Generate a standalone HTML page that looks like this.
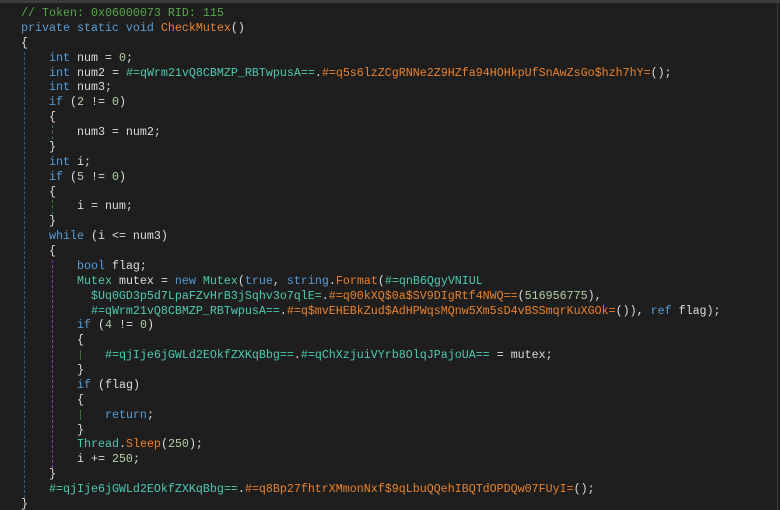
<!DOCTYPE html>
<html><head><meta charset="utf-8"><style>
html,body{margin:0;padding:0;background:#1e1e1e;width:780px;height:510px;overflow:hidden;position:relative}
.top{position:absolute;left:0;top:0;width:780px;height:3px;background:#3c3c3c}
.rb{position:absolute;right:2px;top:0;width:1px;height:510px;background:#3a3a3a}
pre{position:absolute;left:21px;top:6px;margin:0;font-family:"Liberation Mono",monospace;font-size:11.67px;line-height:14.88px;color:#dcdcdc}
.c{color:#57a64a}.k{color:#569cd6}.m{color:#e8822e}.t{color:#4ec9b0}.n{color:#b5cea8}.o{color:#e8822e}
.g{position:absolute;width:0;border-left:1px dashed}
</style></head><body>
<div class="top"></div><div class="rb"></div>
<div class="g" style="left:24px;top:52px;height:446px;border-color:#2a5f8a"></div>
<div class="g" style="left:52px;top:125px;height:20px;border-color:#3a7a3a"></div>
<div class="g" style="left:52px;top:200px;height:20px;border-color:#3a7a3a"></div>
<div class="g" style="left:52px;top:260px;height:208px;border-color:#8a3fb0"></div>
<div class="g" style="left:80px;top:350px;height:10px;border-color:#3a7a3a"></div>
<div class="g" style="left:80px;top:410px;height:10px;border-color:#3a7a3a"></div>
<pre><span class="c">// Token: 0x06000073 RID: 115</span>
<span class="k">private static void</span> <span class="m">CheckMutex</span>()
{
    <span class="k">int</span> num = <span class="n">0</span>;
    <span class="k">int</span> num2 = <span class="t">#=qWrm21vQ8CBMZP_RBTwpusA==</span>.<span class="o">#=q5s6lzZCgRNNe2Z9HZfa94HOHkpUfSnAwZsGo$hzh7hY=</span>();
    <span class="k">int</span> num3;
    <span class="k">if</span> (<span class="n">2</span> != <span class="n">0</span>)
    {
        num3 = num2;
    }
    <span class="k">int</span> i;
    <span class="k">if</span> (<span class="n">5</span> != <span class="n">0</span>)
    {
        i = num;
    }
    <span class="k">while</span> (i &lt;= num3)
    {
        <span class="k">bool</span> flag;
        <span class="t">Mutex</span> mutex = <span class="k">new</span> <span class="t">Mutex</span>(<span class="k">true</span>, <span class="k">string</span>.<span class="o">Format</span>(<span class="t">#=qnB6QgyVNIUL</span>
          <span class="t">$Uq0GD3p5d7LpaFZvHrB3jSqhv3o7qlE=</span>.<span class="o">#=q00kXQ$0a$SV9DIgRtf4NWQ==</span>(<span class="n">516956775</span>),
          <span class="t">#=qWrm21vQ8CBMZP_RBTwpusA==</span>.<span class="o">#=q$mvEHEBkZud$AdHPWqsMQnw5Xm5sD4vBSSmqrKuXGOk=</span>()), <span class="k">ref</span> flag);
        <span class="k">if</span> (<span class="n">4</span> != <span class="n">0</span>)
        {
            <span class="t">#=qjIje6jGWLd2EOkfZXKqBbg==</span>.<span class="t">#=qChXzjuiVYrb8OlqJPajoUA==</span> = mutex;
        }
        <span class="k">if</span> (flag)
        {
            <span class="k">return</span>;
        }
        <span class="t">Thread</span>.<span class="o">Sleep</span>(<span class="n">250</span>);
        i += <span class="n">250</span>;
    }
    <span class="t">#=qjIje6jGWLd2EOkfZXKqBbg==</span>.<span class="o">#=q8Bp27fhtrXMmonNxf$9qLbuQQehIBQTdOPDQw07FUyI=</span>();
}</pre>
</body></html>
